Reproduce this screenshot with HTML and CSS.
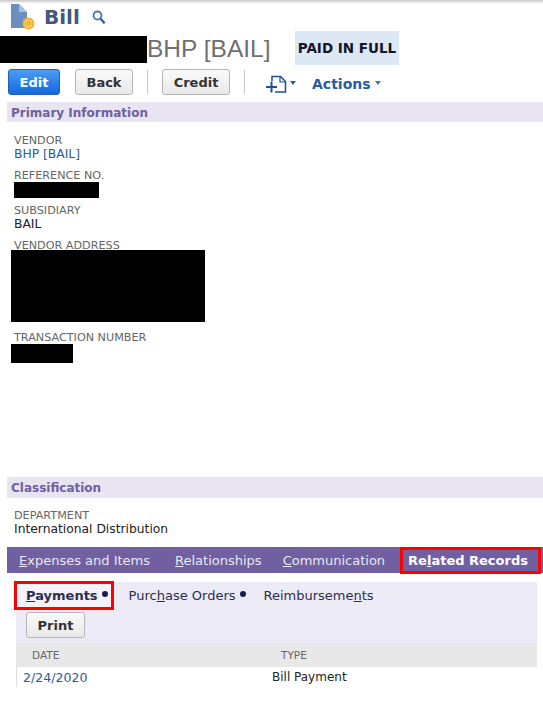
FILE: index.html
```html
<!DOCTYPE html>
<html lang="en">
<head>
    <meta charset="UTF-8">
    <meta name="viewport" content="width=device-width, initial-scale=1.0">
    <title>Bill</title>
    <link rel="stylesheet" href="styles.css">
</head>
<body>
    <div class="top-shadow"></div>

    <div class="page-head">
        <svg class="bill-icon" width="24" height="26" viewBox="0 0 24 26">
            <path d="M0 0H8L16 8V24H0Z" fill="#6b8fc0"/>
            <path d="M8 0L16 8H8Z" fill="#a9bfdd"/>
            <circle cx="17.500" cy="19.500" r="6" fill="#f5b52e"/>
            <circle cx="17.500" cy="19.500" r="3.500" fill="none" stroke="#fbd986" stroke-width="1"/>
        </svg>
        <span class="page-title">Bill</span>
        <svg class="search-icon" width="14" height="15" viewBox="0 0 14 15">
            <circle cx="5.500" cy="5.500" r="4" fill="none" stroke="#4a76ad" stroke-width="1.800"/>
            <path d="M8.500 8.800L12.600 13.200" stroke="#2f5f9c" stroke-width="2.400"/>
        </svg>
    </div>

    <div class="record-row">
        <div class="redact redact-name"></div>
        <div class="record-name">BHP [BAIL]</div>
        <div class="status">PAID IN FULL</div>
    </div>

    <div class="button-row">
        <button class="btn btn-primary">Edit</button>
        <button class="btn btn-back">Back</button>
        <div class="sep sep-a"></div>
        <button class="btn btn-credit">Credit</button>
        <div class="sep sep-b"></div>
        <svg class="new-icon" width="22" height="22" viewBox="0 0 22 22">
            <path d="M7 9V4.500H15.500L20.500 9.500V20H10" fill="none" stroke="#1f4f96" stroke-width="1.500"/>
            <path d="M15 4.500V10H20.500" fill="none" stroke="#1f4f96" stroke-width="1.200"/>
            <path d="M1 15H12M6.500 9.500V20.500" stroke="#1f4f96" stroke-width="2"/>
        </svg>
        <span class="caret caret-new"></span>
        <span class="actions">Actions</span>
        <span class="caret caret-actions"></span>
    </div>

    <div class="section-bar">Primary Information</div>

    <div class="fields">
        <div class="field field-vendor">
            <div class="field-label">VENDOR</div>
            <div class="field-value link">BHP [BAIL]</div>
        </div>
        <div class="field field-ref">
            <div class="field-label">REFERENCE NO.</div>
            <div class="redact redact-ref"></div>
        </div>
        <div class="field field-sub">
            <div class="field-label">SUBSIDIARY</div>
            <div class="field-value">BAIL</div>
        </div>
        <div class="field field-addr">
            <div class="field-label">VENDOR ADDRESS</div>
            <div class="redact redact-addr"></div>
        </div>
        <div class="field field-trans">
            <div class="field-label">TRANSACTION NUMBER</div>
            <div class="redact redact-trans"></div>
        </div>
    </div>

    <div class="section-bar section-class">Classification</div>

    <div class="field field-dept">
        <div class="field-label">DEPARTMENT</div>
        <div class="field-value">International Distribution</div>
    </div>

    <div class="tabs">
        <span class="tab tab-exp"><u>E</u>xpenses and Items</span>
        <span class="tab tab-rel"><u>R</u>elationships</span>
        <span class="tab tab-comm"><u>C</u>ommunication</span>
        <span class="tab tab-active">Re<u>l</u>ated Records</span>
    </div>

    <div class="sub-panel">
        <div class="subtabs">
            <span class="subtab subtab-active"><u>P</u>ayments<span class="dot"></span></span>
            <span class="subtab">Purc<u>h</u>ase Orders<span class="dot"></span></span>
            <span class="subtab">Reimburseme<u>n</u>ts</span>
        </div>
        <div class="print-row">
            <button class="btn btn-print">Print</button>
        </div>
        <div class="table-head">
            <span class="col-date">DATE</span>
            <span class="col-type">TYPE</span>
        </div>
        <div class="table-row">
            <span class="cell-date link">2/24/2020</span>
            <span class="cell-type">Bill Payment</span>
        </div>
    </div>
</body>
</html>
```

FILE: styles.css
```css
body {
    margin: 0;
    font-family: "DejaVu Sans", Verdana, sans-serif;
    font-size: 12px;
    color: #222;
    background: white;
    overflow: hidden;
}
.top-shadow {
    height: 3px;
    background: linear-gradient(#c9c9c9, #f4f4f4);
}
.page-head {
    display: flex;
    align-items: center;
    height: 26px;
    padding: 1px 0 0 11px;
}
.bill-icon {
    margin-right: 9px;
}
.page-title {
    font-size: 20px;
    font-weight: bold;
    color: #44597a;
    margin-right: 12px;
}
.search-icon {
    margin-top: 1px;
}
.record-row {
    display: flex;
    align-items: center;
    height: 34px;
    margin-top: 1px;
}
.redact {
    background: black;
}
.redact-name {
    width: 147px;
    height: 27px;
    margin-top: 3px;
}
.record-name {
    font-family: "Liberation Sans", Arial, sans-serif;
    font-size: 24.500px;
    color: #6f6f6f;
    width: 148px;
    margin-top: 2px;
    white-space: nowrap;
}
.status {
    width: 104px;
    height: 34px;
    line-height: 34px;
    text-align: center;
    background: #dce8f3;
    font-size: 13.500px;
    font-weight: bold;
    color: #15152a;
    white-space: nowrap;
}
.button-row {
    display: flex;
    align-items: center;
    height: 26px;
    margin-top: 4px;
    padding-left: 8px;
}
.btn {
    font-family: "DejaVu Sans", Verdana, sans-serif;
    font-size: 13px;
    font-weight: bold;
    height: 26px;
    padding: 0;
    color: #333;
    background: linear-gradient(#fafafa, #e8e8e8);
    border: 1px solid #b5b5b5;
    border-radius: 3px;
}
.btn-primary {
    width: 52px;
    color: white;
    background: linear-gradient(#4a9df5, #1467de);
    border-color: #1f62b8;
}
.btn-back {
    width: 58px;
    margin-left: 15px;
}
.sep {
    width: 1px;
    height: 24px;
    background: #c8c8c8;
}
.sep-a {
    margin: 0 14px;
}
.btn-credit {
    width: 68px;
}
.sep-b {
    margin: 0 20px 0 14px;
}
.new-icon {
    margin-top: 2px;
}
.caret {
    width: 0;
    height: 0;
    margin: 2px 0 0 3px;
    border-left: 3px solid transparent;
    border-right: 3px solid transparent;
    border-top: 4px solid #2a5aa0;
}
.caret-new {
    margin-right: 16px;
}
.caret-actions {
    margin-left: 4px;
    border-top-color: #50709f;
}
.actions {
    font-size: 14px;
    font-weight: bold;
    color: #2a5aa0;
    margin-top: 3px;
}
.section-bar {
    height: 20px;
    line-height: 22px;
    margin: 7px 0 0 7px;
    padding-left: 4px;
    background: #e8e4f1;
    font-size: 12px;
    font-weight: bold;
    color: #6f60a0;
}
.fields {
    height: 355px;
    padding-top: 12px;
    box-sizing: border-box;
}
.field {
    padding-left: 14px;
    line-height: 14px;
}
.field-label {
    font-size: 11.200px;
    color: #666;
}
.field-value {
    font-size: 12.300px;
    margin-top: -1px;
}
.link {
    color: #2a5aa0;
}
.field-ref {
    margin-top: 8px;
}
.field-sub {
    margin-top: 6px;
}
.field-addr {
    margin-top: 8px;
}
.field-trans {
    margin-top: 9px;
}
.redact-ref {
    width: 85px;
    height: 16px;
    margin-top: -1px;
}
.redact-addr {
    width: 194px;
    height: 72px;
    margin: -3px 0 0 -3px;
}
.redact-trans {
    width: 62px;
    height: 19px;
    margin: -1px 0 0 -3px;
}
.section-class {
    margin-top: 0;
    height: 21px;
    line-height: 22px;
}
.field-dept {
    margin-top: 11px;
}
.tabs {
    display: flex;
    align-items: center;
    height: 26px;
    margin: 11px 0 0 7px;
    padding-left: 12px;
    background: #7060a2;
    color: #e9e6f3;
    font-size: 13px;
}
.tab {
    white-space: nowrap;
}
.tab-exp {
    margin-right: 25px;
}
.tab-rel {
    margin-right: 21px;
}
.tab-comm {
    margin-right: 15px;
}
.tab-active {
    padding: 0 10px 0 5px;
    height: 27px;
    line-height: 21px;
    box-sizing: border-box;
    border: 3px solid red;
    font-weight: bold;
    color: white;
}
.sub-panel {
    margin: 9px 6px 0 16px;
    background: #eceaf4;
}
.subtabs {
    display: flex;
    align-items: center;
    height: 26px;
    color: #2d2d4f;
    font-size: 13px;
}
.subtab {
    margin-right: 18px;
    white-space: nowrap;
}
.subtab-active {
    margin-left: -2px;
    margin-right: 15px;
    padding: 0 3px 0 9px;
    height: 29px;
    line-height: 23px;
    box-sizing: border-box;
    border: 3px solid red;
    font-weight: bold;
    background: #f4f3f9;
}
.dot {
    display: inline-block;
    width: 6px;
    height: 6px;
    margin: 0 0 3px 4px;
    border-radius: 50%;
    background: #1c1c55;
}
.print-row {
    padding: 4px 0 5px 10px;
}
.btn-print {
    display: block;
    width: 59px;
}
.table-head {
    display: flex;
    align-items: center;
    height: 24px;
    background: #e8e8e8;
    color: #666;
    font-size: 10.500px;
}
.col-date {
    width: 249px;
    padding-left: 16px;
}
.table-row {
    display: flex;
    align-items: center;
    height: 20px;
    background: white;
    border-left: 1px solid #ddd;
}
.cell-date {
    width: 249px;
    padding-left: 6px;
    font-size: 12.600px;
}
.cell-type {
    font-size: 12px;
}
```
